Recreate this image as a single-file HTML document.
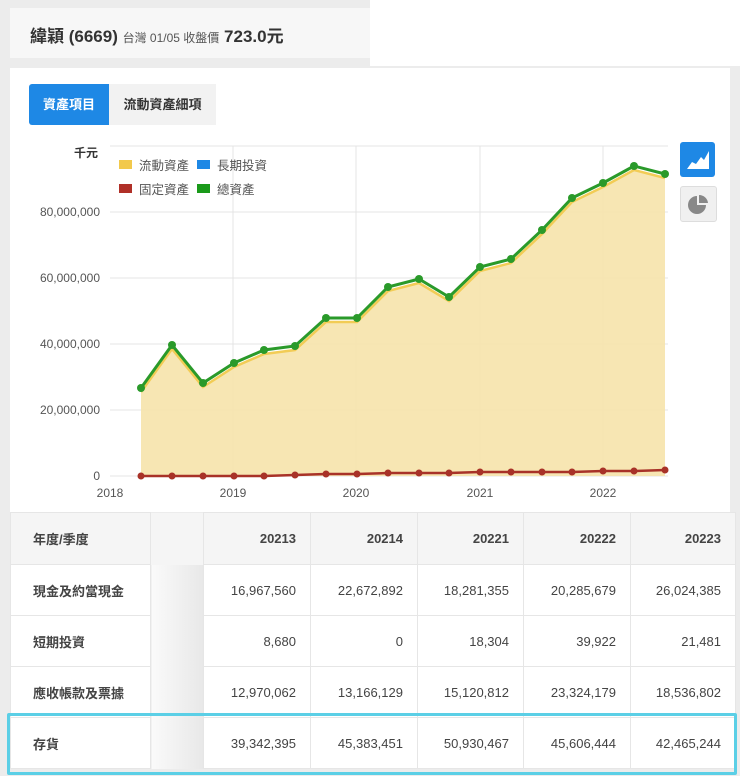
<!DOCTYPE html>
<html><head><meta charset="utf-8"><style>
body{margin:0;width:740px;height:776px;background:#ececec;font-family:"Liberation Sans","Noto Sans CJK TC",sans-serif;position:relative;overflow:hidden}
.hdr{position:absolute;left:10px;top:8px;width:360px;height:50px;background:#f7f7f7;}
.topw{position:absolute;left:370px;top:0;width:370px;height:66px;background:#fff}
.card{position:absolute;left:10px;top:68px;width:720px;height:444px;background:#fff}
.tab{position:absolute;top:84px;height:41px;line-height:41px;font-size:13px;font-weight:bold;text-align:center}
table{position:absolute;left:10px;top:512px;border-collapse:collapse;font-size:13px;color:#444;table-layout:fixed;width:725px}
td{height:51px;box-sizing:border-box;border:1px solid #e6e6e6;text-align:right;padding:0 14px 0 0;background:#fff;overflow:hidden;white-space:nowrap}
td.l{text-align:left;padding-left:22px;font-weight:bold;background:#fff}
td.b{background:linear-gradient(90deg,#fafafa,#e8e8e8);padding:0;border:none}
tr.h td{background:#f5f5f5;font-weight:bold;height:52px}
</style></head><body>
<div class="topw"></div>
<div class="hdr"><div style="position:absolute;left:20px;top:14px;font-size:17px;font-weight:bold;color:#333">緯穎 (6669) <span style="font-size:12px;font-weight:normal;color:#555">台灣 01/05 收盤價</span> <span style="font-size:17px">723.0元</span></div></div>
<div class="card"></div>
<div class="tab" style="left:29px;width:80px;background:#1e88e5;color:#fff;border-radius:3px 0 0 3px">資產項目</div>
<div class="tab" style="left:109px;width:107px;background:#f2f2f2;color:#333">流動資產細項</div>
<div style="position:absolute;left:680px;top:142px;width:35px;height:35px;background:#1e88e5;border-radius:3px"><svg width="35" height="35"><path d="M7 27 L12 20 L16 22 L21 15 L24 18 L29 9 L29 27Z" fill="#fff"/></svg></div>
<div style="position:absolute;left:680px;top:186px;width:35px;height:34px;background:#f0f0f0;border:1px solid #ddd;border-radius:3px"><svg width="35" height="34"><path d="M16 9 A9 9 0 1 0 25 18 L16 18Z" fill="#888"/><path d="M18 8 A9 9 0 0 1 27 16 L18 16Z" fill="#888"/></svg></div>
<svg style="position:absolute;left:0;top:0" width="740" height="512" font-family="Liberation Sans" font-size="12" fill="#555">
<g stroke="#e4e4e4"><line x1="110" y1="212" x2="668" y2="212"/><line x1="110" y1="278" x2="668" y2="278"/><line x1="110" y1="344" x2="668" y2="344"/><line x1="110" y1="410" x2="668" y2="410"/><line x1="110" y1="476" x2="668" y2="476"/>
<line x1="233" y1="146" x2="233" y2="476"/><line x1="356" y1="146" x2="356" y2="476"/><line x1="480" y1="146" x2="480" y2="476"/><line x1="603" y1="146" x2="603" y2="476"/><line x1="110" y1="146" x2="668" y2="146"/></g>
<g text-anchor="end"><text x="100" y="216">80,000,000</text><text x="100" y="282">60,000,000</text><text x="100" y="348">40,000,000</text><text x="100" y="414">20,000,000</text><text x="100" y="480">0</text></g>
<g text-anchor="middle"><text x="110" y="497">2018</text><text x="233" y="497">2019</text><text x="356" y="497">2020</text><text x="480" y="497">2021</text><text x="603" y="497">2022</text></g>
<text x="74" y="157" font-weight="bold" fill="#333" font-family="Liberation Sans,Noto Sans CJK TC">千元</text>
<path d="M141 392 L172 349 L203 387 L234 367 L264 354 L295 350 L326 322 L357 322 L388 291 L419 283 L449 301 L480 271 L511 263 L542 234 L572 202 L603 187 L634 170 L665 178 L665 476 L141 476Z" fill="#f6e3ab" opacity="0.9"/>
<polyline points="141,392 172,349 203,387 234,367 264,354 295,350 326,322 357,322 388,291 419,283 449,301 480,271 511,263 542,234 572,202 603,187 634,170 665,178" fill="none" stroke="#f2cc55" stroke-width="2.5"/>
<polyline points="141,388 172,345 203,383 234,363 264,350 295,346 326,318 357,318 388,287 419,279 449,297 480,267 511,259 542,230 572,198 603,183 634,166 665,174" fill="none" stroke="#2a9a2a" stroke-width="3"/>
<g fill="#2a9a2a"><circle cx="141" cy="388" r="4"/><circle cx="172" cy="345" r="4"/><circle cx="203" cy="383" r="4"/><circle cx="234" cy="363" r="4"/><circle cx="264" cy="350" r="4"/><circle cx="295" cy="346" r="4"/><circle cx="326" cy="318" r="4"/><circle cx="357" cy="318" r="4"/><circle cx="388" cy="287" r="4"/><circle cx="419" cy="279" r="4"/><circle cx="449" cy="297" r="4"/><circle cx="480" cy="267" r="4"/><circle cx="511" cy="259" r="4"/><circle cx="542" cy="230" r="4"/><circle cx="572" cy="198" r="4"/><circle cx="603" cy="183" r="4"/><circle cx="634" cy="166" r="4"/><circle cx="665" cy="174" r="4"/></g>
<polyline points="141,476 172,476 203,476 234,476 264,476 295,475 326,474 357,474 388,473 419,473 449,473 480,472 511,472 542,472 572,472 603,471 634,471 665,470" fill="none" stroke="#a83228" stroke-width="2.5"/>
<g fill="#a83228"><circle cx="141" cy="476" r="3.5"/><circle cx="172" cy="476" r="3.5"/><circle cx="203" cy="476" r="3.5"/><circle cx="234" cy="476" r="3.5"/><circle cx="264" cy="476" r="3.5"/><circle cx="295" cy="475" r="3.5"/><circle cx="326" cy="474" r="3.5"/><circle cx="357" cy="474" r="3.5"/><circle cx="388" cy="473" r="3.5"/><circle cx="419" cy="473" r="3.5"/><circle cx="449" cy="473" r="3.5"/><circle cx="480" cy="472" r="3.5"/><circle cx="511" cy="472" r="3.5"/><circle cx="542" cy="472" r="3.5"/><circle cx="572" cy="472" r="3.5"/><circle cx="603" cy="471" r="3.5"/><circle cx="634" cy="471" r="3.5"/><circle cx="665" cy="470" r="3.5"/></g>
<g font-family="Liberation Sans,Noto Sans CJK TC" font-size="12.5">
<rect x="119" y="160" width="13" height="9" fill="#f2c94c"/><text x="139" y="170">流動資產</text>
<rect x="197" y="160" width="13" height="9" fill="#1e88e5"/><text x="217" y="170">長期投資</text>
<rect x="119" y="184" width="13" height="9" fill="#b03028"/><text x="139" y="194">固定資產</text>
<rect x="197" y="184" width="13" height="9" fill="#1a9a1a"/><text x="217" y="194">總資產</text></g>
</svg>
<table>
<colgroup><col style="width:140px"><col style="width:53px"><col style="width:107px"><col style="width:107px"><col style="width:106px"><col style="width:107px"><col style="width:105px"></colgroup>
<tr class="h"><td class="l">年度/季度</td><td class="b"></td><td>20213</td><td>20214</td><td>20221</td><td>20222</td><td>20223</td></tr>
<tr><td class="l">現金及約當現金</td><td class="b"></td><td>16,967,560</td><td>22,672,892</td><td>18,281,355</td><td>20,285,679</td><td>26,024,385</td></tr>
<tr><td class="l">短期投資</td><td class="b"></td><td>8,680</td><td>0</td><td>18,304</td><td>39,922</td><td>21,481</td></tr>
<tr><td class="l">應收帳款及票據</td><td class="b"></td><td>12,970,062</td><td>13,166,129</td><td>15,120,812</td><td>23,324,179</td><td>18,536,802</td></tr>
<tr><td class="l">存貨</td><td class="b"></td><td>39,342,395</td><td>45,383,451</td><td>50,930,467</td><td>45,606,444</td><td>42,465,244</td></tr>
</table>
<div style="position:absolute;left:7px;top:713px;width:724px;height:56px;border:3px solid #5bcfe6;border-radius:2px"></div>
</body></html>
